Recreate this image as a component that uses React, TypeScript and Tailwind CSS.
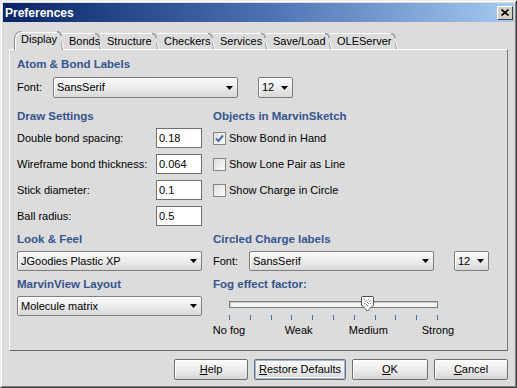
import React from "react";

const tabs: { label: string; w: number; cls: string }[] = [
  { label: "Display", w: 48, cls: "w-[48px]" },
  { label: "Bonds", w: 38, cls: "w-[38px]" },
  { label: "Structure", w: 57, cls: "w-[57px]" },
  { label: "Checkers", w: 56, cls: "w-[56px]" },
  { label: "Services", w: 53, cls: "w-[53px]" },
  { label: "Save/Load", w: 64, cls: "w-[64px]" },
  { label: "OLEServer", w: 66, cls: "w-[66px]" },
];

function Arrow() {
  return (
    <svg width="7" height="4" viewBox="0 0 7 4" className="absolute right-[4px] top-1/2 -translate-y-1/2">
      <path d="M0 0 H7 L3.5 4 Z" fill="#000" />
    </svg>
  );
}

function Combo({ text, cls }: { text: string; cls: string }) {
  return (
    <div
      className={
        "relative flex items-center pl-[3px] border border-[#7d7d7d] rounded-[2px] bg-gradient-to-b from-[#fafafa] via-[#ececec] to-[#d8d8d8] shadow-[inset_1px_1px_0_#ffffff] " +
        cls
      }
    >
      <span className="leading-none">{text}</span>
      <Arrow />
    </div>
  );
}

function Field({ label, value }: { label: string; value: string }) {
  return (
    <div className="flex h-[20px] items-center justify-between">
      <span>{label}</span>
      <div className="flex h-[20px] w-[46px] items-center border border-[#6f6f6f] bg-white pl-[2px]">
        {value}
      </div>
    </div>
  );
}

function Check({ label, checked }: { label: string; checked?: boolean }) {
  return (
    <div className="flex h-[20px] items-center">
      <div className="relative h-[13px] w-[13px] border border-[#858585] bg-gradient-to-br from-[#dedede] to-[#fbfbfb]">
        {checked && (
          <svg width="11" height="11" viewBox="0 0 11 11" className="absolute left-0 top-0">
            <path d="M2 5.5 L4.5 8 L9 2.5" stroke="#4d6aac" strokeWidth="2" fill="none" />
          </svg>
        )}
      </div>
      <span className="ml-[3px]">{label}</span>
    </div>
  );
}

function Heading({ children }: { children: React.ReactNode }) {
  return (
    <div className="h-[14px] text-[11.5px] font-bold leading-[14px] text-[#34548f]">{children}</div>
  );
}

function Btn({ cls, children, focus }: { cls: string; children: React.ReactNode; focus?: boolean }) {
  return (
    <div
      className={
        "flex h-[21px] items-center justify-center rounded-[2px] border border-[#6e6e6e] bg-gradient-to-b from-[#fbfbfb] via-[#ededed] to-[#d6d6d6] " +
        (focus ? "shadow-[inset_0_0_0_1px_#9fb6dc,inset_0_0_0_2px_#f4f6fa] " : "shadow-[inset_1px_1px_0_#ffffff] ") +
        cls
      }
    >
      {children}
    </div>
  );
}

function Thumb() {
  const dots: [number, number][] = [
    [4, 3], [6, 4], [8, 3], [10, 4], [5, 5], [7, 6], [9, 5], [4, 7], [6, 8], [8, 7], [10, 7], [7, 9],
  ];
  return (
    <svg width="15" height="16" viewBox="0 0 15 16" className="absolute left-[131px] top-0">
      <path d="M1.5 1.5 Q1.5 0.5 2.5 0.5 H12.5 Q13.5 0.5 13.5 1.5 V9 L7.5 15 L1.5 9 Z" fill="#ffffff" stroke="#4f4f4f" />
      {dots.map(([x, y], i) => (
        <rect key={i} x={x} y={y} width="1" height="1" fill="#8a8a8a" />
      ))}
    </svg>
  );
}

function Tab({ label, w, cls, idx }: { label: string; w: number; cls: string; idx: number }) {
  const sel = idx === 0;
  const h = sel ? 19 : 16;
  return (
    <div className={"relative " + cls + (sel ? " h-[19px] z-10 -mb-[1px]" : " h-[16px]")}>
      <svg width={w + 4} height={h} viewBox={`0 0 ${w + 4} ${h}`} className="absolute left-0 top-0">
        {sel && <path d={`M0 ${h} L1 8 Q2 1 8 0.5 H${w - 5} Q${w - 1.5} 0.5 ${w - 1} 4 L${w + 0.5} ${h} Z`} fill="#dcdcdc" />}
        {sel ? (
          <>
            <path d={`M1.5 ${h} L1.5 9 Q2 1.5 8 1.5 H${w - 5}`} stroke="#ffffff" fill="none" />
            <path d={`M0.5 ${h} L0.5 8 Q1 0.5 7.5 0.5`} stroke="#8a8a8a" fill="none" />
          </>
        ) : (
          <path d={`M0 0.5 H${w - 5}`} stroke="#ffffff" fill="none" />
        )}
        <path
          d={`M${w - 5} 0.5 Q${w - 1.5} 0.5 ${w - 1} 4 L${w + 0.5} ${h}`}
          stroke="#7a7a7a"
          fill="none"
        />
        <path d={`M${w - 1} 5 L${w + 0.5 + 1} ${h}`} stroke="#ffffff" fill="none" />
      </svg>
      <div className={"relative flex h-full items-center pl-[7px] " + (sel ? "pb-[2px]" : "")}>{label}</div>
    </div>
  );
}

export default function App() {
  const ticks = Array.from({ length: 11 });
  return (
    <div className="h-[388px] w-[517px] overflow-hidden bg-[#dcdcdc] font-['Liberation_Sans',Arial,sans-serif] text-[11px] text-black">
      <div className="h-[388px] w-[517px] border-l border-t border-r border-b border-l-[#ececec] border-t-[#ececec] border-r-[#404040] border-b-[#404040]">
        <div className="h-[386px] w-[515px] border-l border-t border-r border-b border-l-[#ffffff] border-t-[#ffffff] border-r-[#808080] border-b-[#808080] px-[1px] pt-[1px]">
          {/* Title bar */}
          <div className="flex h-[19px] items-center justify-between bg-gradient-to-r from-[#0a246a] via-[#4a6fb0] to-[#a6caf0] pl-[2px] pr-[1px]">
            <span className="text-[12px] font-bold text-white">Preferences</span>
            <div className="flex h-[14px] w-[16px] items-center justify-center border-l border-t border-r border-b border-l-white border-t-white border-r-[#404040] border-b-[#404040] bg-[#d4d0c8]">
              <svg width="8" height="7" viewBox="0 0 8 7">
                <path d="M0.5 0.5 L7.5 6.5 M7.5 0.5 L0.5 6.5" stroke="#000" strokeWidth="1.6" />
              </svg>
            </div>
          </div>

          {/* Tabs */}
          <div className="ml-[11px] mt-[9px] flex h-[18px] items-end">
            {tabs.map((t, i) => (
              <Tab key={t.label} label={t.label} w={t.w} cls={t.cls} idx={i} />
            ))}
          </div>

          {/* Panel */}
          <div className="relative ml-[6px] h-[302px] w-[499px] border-l border-t border-r border-b border-l-white border-t-white border-r-[#7a7a7a] border-b-[#6a6a6a] pl-[7px]">
            <div className="mt-[7px]">
              <Heading>Atom &amp; Bond Labels</Heading>
            </div>
            <div className="mt-[6px] flex h-[21px] items-center">
              <span className="w-[36px]">Font:</span>
              <Combo text="SansSerif" cls="h-[21px] w-[185px]" />
              <Combo text="12" cls="ml-[20px] h-[21px] w-[35px]" />
            </div>

            <div className="mt-[11px] grid grid-cols-[185px_276px] gap-x-[11px]">
              {/* Draw settings */}
              <div>
                <Heading>Draw Settings</Heading>
                <div className="mt-[5px] flex flex-col gap-[6px]">
                  <Field label="Double bond spacing:" value="0.18" />
                  <Field label="Wireframe bond thickness:" value="0.064" />
                  <Field label="Stick diameter:" value="0.1" />
                  <Field label="Ball radius:" value="0.5" />
                </div>
              </div>
              <div>
                <Heading>Objects in MarvinSketch</Heading>
                <div className="mt-[5px] flex flex-col gap-[6px]">
                  <Check label="Show Bond in Hand" checked />
                  <Check label="Show Lone Pair as Line" />
                  <Check label="Show Charge in Circle" />
                </div>
              </div>

              {/* Look & feel */}
              <div className="mt-[6px]">
                <Heading>Look &amp; Feel</Heading>
                <Combo text="JGoodies Plastic XP" cls="mt-[5px] h-[20px] w-[185px]" />
              </div>
              <div className="mt-[6px]">
                <Heading>Circled Charge labels</Heading>
                <div className="mt-[5px] flex h-[20px] items-center">
                  <span className="w-[36px]">Font:</span>
                  <Combo text="SansSerif" cls="h-[20px] w-[185px]" />
                  <Combo text="12" cls="ml-[20px] h-[20px] w-[35px]" />
                </div>
              </div>

              {/* MarvinView / Fog */}
              <div className="mt-[6px]">
                <Heading>MarvinView Layout</Heading>
                <Combo text="Molecule matrix" cls="mt-[5px] h-[20px] w-[185px]" />
              </div>
              <div className="mt-[6px]">
                <Heading>Fog effect factor:</Heading>
                <div className="relative ml-[16px] mt-[5px] flex h-[16px] w-[209px] items-center">
                  <div className="h-[7px] w-[209px] border border-[#7c7c7c] bg-[#f4f4f4] shadow-[inset_1px_1px_0_#c8c8c8]" />
                  <Thumb />
                </div>
                <div className="ml-[16px] mt-[3px] flex h-[5px] w-[209px] justify-between">
                  {ticks.map((_, i) => (
                    <div key={i} className="h-[5px] w-[1px] bg-[#4f6ea6]" />
                  ))}
                </div>
                <div className="-ml-[14px] mt-[2px] flex w-[269px] justify-between">
                  <span className="w-[60px] text-center">No fog</span>
                  <span className="w-[60px] text-center">Weak</span>
                  <span className="w-[60px] text-center">Medium</span>
                  <span className="w-[60px] text-center">Strong</span>
                </div>
              </div>
            </div>
          </div>

          {/* Buttons */}
          <div className="ml-[6px] mt-[8px] flex w-[499px] justify-end gap-[6px]">
            <Btn cls="w-[74px]">
              <span><span className="underline">H</span>elp</span>
            </Btn>
            <Btn cls="w-[92px]" focus>
              <span><span className="underline">R</span>estore Defaults</span>
            </Btn>
            <Btn cls="w-[76px]">
              <span><span className="underline">O</span>K</span>
            </Btn>
            <Btn cls="w-[74px]">
              <span><span className="underline">C</span>ancel</span>
            </Btn>
          </div>
        </div>
      </div>
    </div>
  );
}
